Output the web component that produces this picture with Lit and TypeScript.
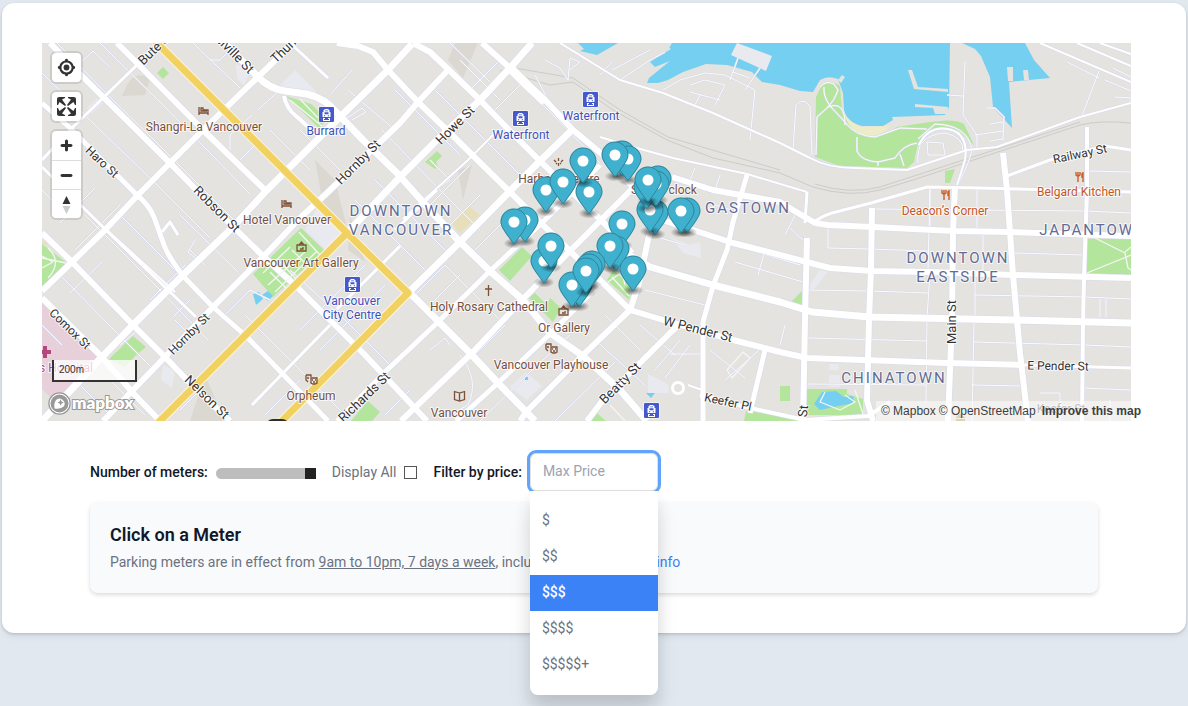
import { LitElement, html, svg, css } from "lit";
import { customElement, state } from "lit/decorators.js";

const MAJOR: [number, string][] = [
  [6, "M50 43 83 77 170 163 213 207 263 256 297 287 363 353 427 421"],
  [6, "M117 43 137 63 203 130 266 191"],
  [5, "M42 103 70 128 137 195 Q149 205 154 217 L164 245 Q168 256 183 276 L213 307 247 337 277 368 328 421"],
  [6, "M42 233 72 262 133 325 165 357 187 380 230 421"],
  [6, "M42 298 100 355 133 393 160 421"],
  [6, "M42 291 72 262 105 230 137 196 170 163 203 130 258 77 293 43"],
  [7, "M42 421 100 359 133 325 182 276 233 227 266 191 290 167 337 120 388 70 412 44"],
  [6, "M103 421 165 357 213 307 263 257 300 218 327 193 400 123 418 102 448 70"],
  [7, "M347 233 400 177 437 140 480 100 510 68 532 43"],
  [7, "M408 293 460 242 510 191 540 161 573 129"],
  [5, "M337 421 387 370 437 323 490 271 543 222 600 165"],
  [6, "M401 421 472 353 523 299 570 251 633 188"],
  [5, "M456 421 498 383 550 334 603 281"],
  [6, "M520 421 527 411 583 355 630 310 639 283 648 240 656 210"],
  [6, "M587 421 603 400 670 333 684 320"],
  [6, "M413 43 430 52 448 69 480 100 510 131 540 161 570 190 603 222 632 253"],
  [6, "M482 43 510 68 523 82 547 102 573 130 603 155 633 187"],
  [9, "M508 66 525 83 545 102"],
  [6, "M337 43 358 46 373 52 388 70 418 102 450 133 510 192 543 225 570 251 607 287 630 310"],
  [7, "M225 43 258 77 Q270 89 285 91 L307 94 Q325 98 337 113 L363 140 397 173 430 210 460 242 490 271 523 300 550 333 583 356 620 390 647 421"],
  [7, "M408 291 440 323 470 353 498 383 535 421"],
  [6, "M672 177 713 190 780 202 793 210 815 223 828 225 873 227 953 231 1010 232 1131 236"],
  [6, "M656 218 693 230 733 243 780 255 830 268 872 271 930 272 1013 275 1131 278"],
  [7, "M620 250 650 267 713 285 780 302 812 312 870 317 1013 320 1131 323"],
  [6, "M630 310 663 320 733 340 780 352 807 358 947 363 1023 365"],
  [6, "M807 238 805 320 803 421"],
  [6, "M872 208 871 270 869 320 867 400 873 421"],
  [6, "M955 187 953 231 952 320 948 421"],
  [6, "M1003 153 1007 190 1010 232 1013 275 1020 353 1028 421"],
  [5, "M747 175 733 222 727 250 713 286 703 322 703 421"],
  [5, "M765 350 750 413"],
  [4, "M700 395 750 408 805 420 868 416 890 402"],
];

const MEDIUM: [number, string][] = [
  [3, "M42 160 73 127 137 65 158 43"],
  [2, "M107 230 175 292"],
  [3, "M42 167 107 231 196 317"],
  [3, "M813 223 Q820 217 832 213 L871 203 927 187 980 188 1131 192"],
  [2, "M600 137 633 147 673 158 747 174 807 192"],
  [3, "M807 192 805 223"],
  [3, "M1007 176 1050 160 1105 146 1131 150"],
  [4, "M1087 127 1087 190 1084 278 1083 323 1082 421"],
  [3, "M1023 365 1131 368"],
  [2, "M560 43 620 80 663 93 713 113 780 143 810 158 Q828 168 855 168 L907 170 967 150 997 147 1080 117 1131 103"],
  [4, "M284 96 Q286 108 296 116 L316 134"],
  [3, "M290 43 328 78"],
  [3, "M162 232 170 222 178 235"],
  [3, "M337 309 400 246M395 230 437 190"],
  [2, "M403 219 468 160 496 132"],
  [3, "M252 405 330 325"],
  [2, "M1040 43 1131 82M1077 43 1131 66M1100 43 1131 54"],
  [2, "M957 185 Q962 170 965 160 Q969 133 948 129 Q928 126 919 145"],
  [2, "M703 330 735 340M688 385 705 391"],
];

const MINOR = [
  "M57 43 110 97 152 138 222 208 236 222",
  "M42 73 95 125 152 180 210 238",
  "M100 43 162 104 210 153 250 194",
  "M93 51 60 82M93 51 110 67M193 43 240 88M210 60 220 60 232 48",
  "M75 250 120 205M60 223 95 188M42 190 66 215",
  "M85 215 160 290 208 340",
  "M118 213 150 245 195 290M60 275 120 336 150 366",
  "M70 293 102 262M150 300 185 265",
  "M180 215 238 272M190 250 205 265M195 240 188 252 200 262",
  "M75 380 110 415M110 380 145 415M42 325 62 345",
  "M150 345 138 330 120 345M173 317 190 300M175 320 190 335",
  "M245 315 300 370 345 415M290 270 345 320 390 365",
  "M220 320 240 300 250 290 270 300M180 410 200 390",
  "M300 330 365 265M320 350 385 285M265 415 300 380",
  "M355 200 430 275M375 180 450 255",
  "M300 130 340 170M270 130 310 170M258 110 285 85",
  "M230 150 230 135 252 115M240 160 260 140M330 95 352 70M348 90 395 130",
  "M347 118 362 108 366 112 352 120M395 90 425 120 460 155",
  "M382 130 440 190 480 230M430 85 490 145 530 185",
  "M460 60 500 100M450 43 490 82M470 90 500 60M490 115 520 85",
  "M500 62 548 110 600 163M420 215 470 165M440 235 480 195",
  "M430 160 450 180 420 200M470 255 510 215M480 280 520 240",
  "M517 80 540 98M535 75 548 100",
  "M545 60 560 68 568 80M570 70 580 62 570 58 568 80",
  "M410 300 445 265 500 320M425 310 460 275",
  "M430 350 445 338 450 345M385 415 410 390",
  "M470 360 505 325M460 355 Q480 380 468 405 L450 415",
  "M480 421 530 372 570 335M540 400 600 343M555 421 615 362",
  "M595 340 645 385M605 315 640 350M640 325 675 355",
  "M645 290 705 305M650 265 690 275",
  "M620 80 650 60 665 52M612 70 650 50M600 75 612 62",
  "M663 90 680 80 705 73 725 75 755 90 750 140M690 85 705 80 725 85 715 105",
  "M690 92 720 100M700 95 695 105M730 80 738 58M745 90 760 68M733 72 750 78",
  "M793 150 796 105 Q800 100 806 102 L810 106 812 155",
  "M820 87 Q826 80 834 84 L838 90 Q835 100 827 108 L817 117 816 155",
  "M824 87 Q823 97 831 107 L845 122 Q855 136 875 137 L900 128 927 129",
  "M828 107 Q845 100 845 125M857 137 857 151 Q861 161 878 162 L895 158 Q903 145 917 143M900 154 904 166M878 161 878 166",
  "M918 163 Q915 135 945 133 Q963 137 963 150M927 142 943 143 945 155 928 155 927 142",
  "M965 61 963 115 977 135 977 148M947 95 963 96M975 135 1003 131",
  "M959 183 Q970 160 972 150 Q968 125 935 124 L918 139",
  "M987 108 995 108 1004 117 1003 140M990 124 1003 122M990 141 1003 139",
  "M1099 71 1082 116M1067 62 1099 78M1105 80 1131 91M1113 68 1131 77M1115 97 1131 98",
  "M873 209 1085 211 1131 213M930 187 930 228M977 188 977 230M1087 171 1131 172",
  "M828 225 828 248 870 249 928 251M1014 253 1083 255M930 187 928 270",
  "M983 232 983 272M975 270 975 320M930 272 927 318 926 402M974 322 972 421",
  "M808 290 870 291 928 293M975 295 1085 297 1131 299M1100 299 1100 317M1106 299 1106 317",
  "M808 338 927 341M974 342 1085 345 1131 347M972 385 1020 386M1083 388 1131 390",
  "M808 384 926 385M1040 393 1060 393 1060 421M1110 400 1110 421",
  "M735 290 803 310M733 245 800 265M735 262 803 282",
  "M690 180 695 168M715 190 720 175M715 205 732 210M660 238 685 245",
  "M765 250 758 275M790 228 803 240M795 215 785 235",
  "M785 325 780 345M725 380 765 345M710 350 745 378",
  "M655 370 680 340M665 378 690 345M670 354 703 354",
];

const THIN = "M727 370 743 352 750 358 732 378ZM42 258 66 263M48 248 Q63 262 48 278M42 268 53 262 42 256M263 273 290 247M268 285 305 252M275 292 316 252M270 272 288 290M280 262 298 281M292 250 308 266M299 232 320 255M1095 238 1125 253 1128 268 1131 270M1087 273 1131 255M1125 252 1131 247M290 100 322 126M300 99 318 118M608 282 622 272 625 285M612 277 629 296M610 405 625 421M855 390 863 414M825 392 820 402 840 410 855 402 845 395";

const AREAS: [string, string][] = [
  ["#dad8d0", "M127 85Q135 70 150 78L145 95 122 96ZM315 160 335 180 350 240 325 215ZM455 43 478 43 463 78 448 60ZM350 215 365 262 348 250ZM205 375 225 421 190 421ZM458 170 472 165 463 200Z"],
  ["#e9eaf0", "M280 85 295 70 322 98ZM236 64 250 70 244 86 237 78ZM87 108 97 98 103 103 91 114ZM305 230 317 208 342 230 327 251ZM510 387 526 372 542 386 527 400ZM648 374 668 384 669 393 648 393ZM672 238 690 245 700 242 701 258 683 253ZM809 286 820 270 828 272 813 290ZM829 375 840 375 840 387 829 387ZM829 364 839 364 839 370 829 370ZM163 365 175 370 172 388 161 380Z"],
  ["#e8d0da", "M42 302 98 357 88 368 56 403 42 389Z"],
  ["#b4e59d", "M42 244 67 263 42 288ZM109 359 133 336 146 347 135 356 125 367ZM301 228 324 250 273 297 253 274ZM286 96 311 104 327 119 319 128ZM157 73 163 67 169 73 163 79ZM351 421 368 401 380 412 372 421ZM425 162 437 151 442 156 436 162 438 166 435 169ZM499 270 522 247 532 256 510 281ZM529 298 535 293 547 305 550 298 561 308 553 322ZM607 280 613 270 631 286 629 300ZM791 302 802 291 802 305ZM780 386 790 386 790 401 780 401ZM807 389 847 389 847 394 863 399 863 415 807 415ZM1087 239 1131 238 1131 275 1087 273ZM590 421 597 413 606 421ZM746 411 803 418 803 421 744 421ZM945 171 955 169 950 183 945 183Z"],
  ["#b4e59d", "M816 97 822 85Q830 79 840 86L842 110 Q848 124 856 131 L877 137Q890 132 897 127L930 122Q955 118 964 124L974 145 960 132Q945 124 930 130L918 143 914 162 907 168 840 166 815 157Z"],
  ["#ececc8", "M842 104Q848 124 862 127L890 126Q878 140 860 134Q845 127 842 104Z"],
  ["#e6dfb9", "M452 224 468 206 480 215 460 233ZM42 243 47 238 47 246Z"],
  ["#75cff0", "M578 43 584 49 580 51 597 55 618 43ZM672 43 668 50 650 62 655 67 670 61 649 78 647 83 658 83 668 80 683 72 706 64 727 65 752 72 762 82 780 85 800 91 813 92 820 80Q828 75 838 79L843 93 844 110Q847 122 862 126L883 126 893 120 892 117 945 115 949 107 950 43Z"],
  ["#75cff0", "M962 43 975 49 981 56 990 77 993 107 1012 128 1009 82 1050 78 1034 60 1025 43ZM253 294 259 292 263 299 256 305ZM262 295 268 291 273 296 268 301ZM646 393 655 393 651 398ZM525 377 528 377 528 380 525 380ZM814 404 822 392 836 391 844 397 853 396 854 403 838 406 820 410Z"],
  ["#e4e3df", "M623 48 632 43 640 43 627 51ZM653 55 668 47 671 49 656 58ZM908 70 912 70 918 87 948 89 948 92 914 89ZM915 104 948 107 947 114 935 114 933 108 915 107ZM1007 67 1013 67 1013 81 1008 81ZM1023 70 1028 70 1029 80 1024 80ZM838 80 842 75 845 77 841 83Z"],
  ["#e9eaf0", "M737 43 772 56 766 71 731 55Z"],
];

type Label = [string, number, number, number, number?];
const STREETS: Label[] = [
  ["Bute St", 155, 48, -44, 13], ["Melville St", 231, 50, 45, 13], ["Thurlow St", 295, 39, -44, 13],
  ["Haro St", 102, 162, 43], ["Robson St", 217, 209, 45, 13], ["Hornby St", 358, 162, -45, 13],
  ["Howe St", 455, 125, -45, 13], ["Comox St", 70, 329, 44], ["Hornby St", 189, 334, -45],
  ["Nelson St", 207, 397, 44, 13], ["Richards St", 364, 397, -44, 13], ["Beatty St", 620, 383, -45, 13],
  ["W Pender St", 698, 329, 14, 13], ["Keefer Pl", 728, 402, 12], ["Railway St", 1080, 154, -12],
  ["Main St", 951, 322, -90, 13], ["E Pender St", 1058, 366, 1], ["St", 803, 411, -84, 13],
];
const PLACES: Label[] = [
  ["Shangri-La Vancouver", 204, 127, 0], ["Hotel Vancouver", 287, 220, 0],
  ["Vancouver Art Gallery", 301, 263, 0], ["Orpheum", 311, 396, 0],
  ["Harbour Centre", 559, 179, 0], ["Steam clock", 664, 190, 0],
  ["Holy Rosary Cathedral", 489, 307, 0], ["Or Gallery", 564, 328, 0],
  ["Vancouver Playhouse", 551, 365, 0], ["Vancouver", 459, 413, 0],
];
const FOOD: Label[] = [["Deacon’s Corner", 945, 211, 0], ["Belgard Kitchen", 1079, 192, 0]];
const TRANSIT: Label[] = [
  ["Burrard", 326, 131, 0], ["Waterfront", 521, 135, 0], ["Waterfront", 591, 116, 0],
  ["Vancouver", 352, 301, 0], ["City Centre", 352, 315, 0],
];
const AREAS_TXT: Label[] = [
  ["DOWNTOWN", 401, 211, 0], ["VANCOUVER", 401, 230, 0], ["GASTOWN", 748, 208, 0],
  ["DOWNTOWN", 958, 258, 0], ["EASTSIDE", 958, 277, 0], ["CHINATOWN", 894, 378, 0],
  ["JAPANTOWN", 1093, 230, 0],
];
const STATIONS = [[326, 114], [520, 118], [590, 99], [352, 284], [651, 410]];
const PINS = [
  [622, 154], [628, 159], [615, 155], [589, 192], [583, 161], [546, 190], [563, 182],
  [655, 213], [650, 210], [647, 187], [658, 179], [656, 184], [648, 180],
  [687, 211], [681, 211], [525, 220], [514, 222], [544, 261], [551, 246],
  [622, 224], [616, 249], [610, 246], [633, 269], [579, 285], [572, 285],
  [592, 264], [589, 267], [586, 271],
];
const PRICES = ["$", "$$", "$$$", "$$$$", "$$$$$+"];

@customElement("street-map")
class StreetMap extends LitElement {
  static styles = css`
    :host { display: block; height: 378px; overflow: hidden; background: #e4e3df; }
    svg { display: block; width: 100%; height: 100%; font: 400 12px Roboto, sans-serif; }
    text { text-anchor: middle; dominant-baseline: central; paint-order: stroke; stroke: #fff;
      stroke-opacity: 0.8; stroke-width: 2px; stroke-linejoin: round; }
    .street { fill: #333; }
    .place { fill: #75503f; }
    .food { fill: #c4561f; }
    .transit { fill: #3f51bb; }
    .area { fill: #626b93; font-size: 15px; letter-spacing: 2px; }
    .hospital { fill: #b5477d; }
    .line { fill: none; stroke-linejoin: round; }
    .case { stroke: #d9dbea; }
    .road { stroke: #fff; }
    .alley-case { stroke: #d9dbea; stroke-width: 2px; }
    .alley { stroke: #fbfbfe; stroke-width: 1px; }
    .yellow { stroke: #f2d163; stroke-width: 7px; }
    .yellow-case { stroke: #fdf6dc; stroke-width: 9px; }
    .rail { stroke: #cccbc8; stroke-width: 1px; }
    .thin { stroke: #f4f6f4; stroke-width: 1.3px; }
    .glyph { fill: none; stroke: #7d5038; stroke-width: 1.3px; }
  `;

  private labels(list: Label[], cls: string) {
    return list.map(([t, x, y, r, s]) => svg`<text class=${cls} x=${x} y=${y}
      transform="rotate(${r} ${x} ${y})" font-size=${s ?? 12}>${t}</text>`);
  }

  render() {
    const roads = [...MEDIUM, ...MAJOR];
    const alleys = MINOR.join("");
    return html`<svg viewBox="42 43 1089 378" preserveAspectRatio="xMidYMid slice" role="img" aria-label="Map of downtown Vancouver with parking meters">
      <defs>
        <radialGradient id="shade"><stop offset="0.1" stop-opacity="0.5"/><stop offset="1" stop-opacity="0"/></radialGradient>
      </defs>
      ${AREAS.map(([c, d]) => svg`<path fill=${c} d=${d}/>`)}
      <path class="line rail" d="M500 70 550 85 573 82 613 110 667 140 713 158 780 173 813 187Q850 198 880 190L913 180 1013 147 1080 125Q1100 120 1131 123M503 66 573 78 620 110 668 137 780 170M815 184Q850 195 880 187L1013 144 1080 122"/>
      <path class="line alley-case" d=${alleys}/>
      <path class="line alley" d=${alleys}/>
      ${roads.map(([w, d]) => svg`<path class="line case" stroke-width=${w + 1.2} d=${d}/>`)}
      ${roads.map(([w, d]) => svg`<path class="line road" stroke-width=${w} d=${d}/>`)}
      <path class="line thin" d=${THIN}/>
      <circle class="line road" cx="678" cy="388" r="5.5" stroke-width="3"/>
      <path class="line yellow-case" d="M155 41 347 233 408 293 280 423M347 233 158 423"/>
      <path class="line yellow" d="M155 41 347 233 408 293 280 423M347 233 158 423"/>
      <path fill="#2d2d2d" d="M268 421Q270 419 273 419H282Q285 419 287 421Z"/>
      <path fill="#b5477d" d="M43 346h4v4h4v4h-4v4h-4v-4h-1v-4h1Z"/>
      <text class="hospital" x="66" y="368">s Hospital</text>
      ${this.labels(STREETS, "street")}
      ${this.labels(PLACES, "place")}
      ${this.labels(FOOD, "food")}
      ${this.labels(TRANSIT, "transit")}
      ${this.labels(AREAS_TXT, "area")}
      <text class="street" x="1061" y="409" opacity="0.6">Keefer St</text>
      ${[[203, 111], [286, 204]].map(([x, y]) => svg`<path class="glyph" d="M${x - 4} ${y - 4}v8M${x - 4} ${y + 2}h9v2M${x + 5} ${y + 3}v-4h-5v-2h-2v3h6"/>`)}
      ${[[301, 247], [563, 311]].map(([x, y]) => svg`<path class="glyph" d="M${x - 4} ${y - 2}h9v6h-9ZM${x - 2} ${y - 2}l2.500-3 2.500 3M${x - 1} ${y + 2}h3v-2"/>`)}
      ${[[311, 379], [551, 348]].map(([x, y]) => svg`<path class="glyph" d="M${x - 5} ${y - 4}h5v2M${x - 5} ${y - 4}v5l2 2M${x - 4} ${y - 1}h2M${x} ${y - 1}h6v5l-2 1h-2l-2-1ZM${x + 1} ${y + 1}h1M${x + 4} ${y + 1}h1M${x + 2} ${y + 3}h2"/>`)}
      <path class="glyph" stroke-width="1.6" d="M488.500 285v11M485 289h7"/>
      <path class="glyph" d="M459.500 393l-5-1.500v8l5 1.500 5-1.500v-8ZM459.500 393v8M554 160l2 2M558.500 158v3M563 160l-2 2M556 163l1 1M561 163l-1 1M558.500 163v3"/>
      ${[[945, 195], [1079, 177]].map(([x, y]) => svg`<path fill="none" stroke="#c9602a" stroke-width="1.4" d="M${x - 3} ${y - 5}v3q2 2 4 0v-3M${x - 1} ${y - 5}v10M${x + 4} ${y - 5}v10M${x + 3} ${y - 4}v5"/>`)}
      ${STATIONS.map(([x, y]) => svg`<g transform="translate(${x - 7} ${y - 7})">
        <rect x="-0.5" y="-0.5" width="16" height="16" rx="1" fill="#fff"/>
        <rect width="15" height="15" rx="1" fill="#4559cf"/>
        <path fill="#fff" d="M5.500 2h4v1h1v2h1v5h-8V5h1V3h1ZM4 11h2v1H4ZM9 11h2v1H9ZM4 12h1v1h5v-1h1v2H4Z"/>
        <path fill="#4559cf" d="M6 3.500h3v.8H6ZM5.500 5.200h4v2h-4ZM5 8.200h1.200v1H5ZM8.800 8.200H10v1H8.800Z"/></g>`)}
      <path fill="#bda45a" d="M960 414 966 418H955ZM956 419h9v2h-9Z"/>
      ${PINS.map(([x, y]) => svg`<g transform="translate(${x - 13.5} ${y - 13.5})">
        <ellipse cx="13.5" cy="34.8" rx="10.5" ry="5.25" fill="url(#shade)"/>
        <path fill="#3fb1ce" d="M27 13.5C27 19.07 20.25 27 14.75 34.5C14.02 35.5 12.98 35.5 12.25 34.5C6.75 27 0 19.22 0 13.5C0 6.04 6.04 0 13.5 0C20.96 0 27 6.04 27 13.5Z"/>
        <path fill="none" stroke="#000" stroke-opacity="0.25" d="M26.5 13.5C26.5 18.8 20 26.6 14.35 34.2C13.8 34.9 13.2 34.9 12.65 34.2C7 26.6 .5 18.9 .5 13.5C.5 6.3 6.3 .5 13.5 .5C20.7 .5 26.5 6.3 26.5 13.5Z"/>
        <circle cx="13.5" cy="13.5" r="5.5" fill="#fff"/></g>`)}
    </svg>`;
  }
}

@customElement("app-root")
class AppRoot extends LitElement {
  @state() private active = 2;

  static styles = css`
    :host { display: block; min-height: 100vh; box-sizing: border-box; padding: 3px 2px;
      background: #e1e8f0; font-family: Roboto, sans-serif; font-size: 14px; line-height: 20px; color: #111827; }
    .card { background: #fff; border-radius: 12px; padding: 40px;
      box-shadow: 0 1px 3px rgba(0, 0, 0, 0.16), 0 4px 6px rgba(0, 0, 0, 0.06); }
    .map { position: relative; }
    .canvas { margin-right: 15px; }
    .controls { position: absolute; top: 10px; left: 10px; display: grid; gap: 10px; }
    .group { display: grid; width: 29px; background: #fff; border-radius: 4px; box-shadow: 0 0 0 2px rgba(0, 0, 0, 0.1); }
    .group button { display: block; height: 29px; padding: 0; border: 0; background: none; color: #333; cursor: pointer; }
    .group button + button { border-top: 1px solid #ddd; }
    .group svg { display: block; width: 29px; height: 29px; fill: currentColor; }
    .scale { position: absolute; left: 10px; bottom: 39px; box-sizing: border-box; width: 85px; height: 22px;
      padding: 0 5px; border: 2px solid #333; border-top: 0; background: rgba(255, 255, 255, 0.75);
      color: #333; font: 10px/19px "Liberation Sans", Arial, sans-serif; }
    .logo { position: absolute; left: 6px; bottom: 6px; display: flex; align-items: center; gap: 1px;
      color: #fff; text-decoration: none; font: 800 17px/24px Lato, sans-serif;
      paint-order: stroke; -webkit-text-stroke: 2px #999; }
    .logo svg { width: 23px; height: 23px; }
    .credit { position: absolute; right: 0; bottom: 0; display: flex; gap: 6px; padding: 0 5px;
      background: rgba(255, 255, 255, 0.5); font: 12px/20px "Liberation Sans", Arial, sans-serif; }
    .credit a { color: #404040; text-decoration: none; }
    .credit .strong { font-weight: 700; }
    .credit span { display: flex; gap: 3px; }
    .below { padding: 32px 48px 0; }
    .filters { display: flex; align-items: center; }
    .name { font-weight: 500; }
    .slider { appearance: none; width: 100px; height: 11px; margin: 2px 16px 0 8px; border-radius: 6px 0 0 6px;
      background: #bdbdbd; overflow: hidden; }
    .slider::-webkit-slider-thumb { appearance: none; width: 11px; height: 11px; background: #222; }
    .check { display: flex; align-items: center; gap: 8px; margin-right: 16px; color: #6b7280; }
    .check input { appearance: none; width: 13px; height: 13px; margin: 0; border: 1px solid #555; background: #fff; }
    .check input:checked { background: #222; }
    .combo { position: relative; width: 128px; margin-left: 8px; }
    .field { display: block; box-sizing: border-box; width: 100%; height: 38px; padding: 0 12px 2px;
      border: 1px solid #e0e0e0; border-radius: 6px; outline: 0; background: #fff; color: #374151;
      font: inherit; box-shadow: 0 0 0 3px #60a5fa; }
    .field::placeholder { color: #9ca3af; opacity: 1; }
    .menu { position: absolute; z-index: 2; top: 100%; left: 0; right: 0; display: grid; padding: 12px 0;
      border-radius: 0 0 8px 8px; background: #fff;
      box-shadow: 0 10px 15px rgba(0, 0, 0, 0.1), 0 20px 25px rgba(0, 0, 0, 0.08); }
    .option { height: 36px; padding: 0 12px 2px; border: 0; background: none; color: #6b7280; font: inherit;
      text-align: left; cursor: pointer; }
    .option.on { background: #3b82f6; color: #fff; font-weight: 500; }
    .panel { margin-top: 11px; padding: 20px; border-radius: 8px; background: #f9fafc;
      box-shadow: 0 2px 4px rgba(0, 0, 0, 0.14); }
    .panel h2 { margin: 0 0 5px; font-size: 18px; line-height: 25px; font-weight: 600; }
    .panel p { margin: 0; line-height: 21px; color: #6b7280; }
    .panel a { color: #3b82f6; text-decoration: none; }
  `;

  render() {
    return html`<main class="card">
      <section class="map">
        <street-map class="canvas"></street-map>
        <div class="controls">
          <div class="group"><button aria-label="Find my location"><svg viewBox="0 0 20 20"><path fill-rule="evenodd" d="M10 4C9 4 9 5 9 5v.1A5 5 0 0 0 5.1 9H5s-1 0-1 1 1 1 1 1h.1A5 5 0 0 0 9 14.9v.1s0 1 1 1 1-1 1-1v-.1a5 5 0 0 0 3.9-3.9h.1s1 0 1-1-1-1-1-1h-.1A5 5 0 0 0 11 5.1V5s0-1-1-1zm0 2.5a3.5 3.5 0 1 1 0 7 3.5 3.5 0 1 1 0-7z"/><circle cx="10" cy="10" r="2"/></svg></button></div>
          <div class="group"><button aria-label="Enter fullscreen"><svg viewBox="0 0 29 29"><path d="M24 16v5.5c0 1.75-.75 2.5-2.5 2.5H16v-1l3-1.5-4-5.5 1-1 5.5 4 1.5-3h1zM6 16l1.5 3 5.5-4 1 1-4 5.5 3 1.5v1H7.5C5.75 24 5 23.25 5 21.5V16h1zm7-11v1l-3 1.5 4 5.5-1 1-5.5-4L6 13H5V7.5C5 5.75 5.75 5 7.5 5H13zm11 2.5c0-1.75-.75-2.5-2.5-2.5H16v1l3 1.5-4 5.5 1 1 5.5-4 1.5 3h1V7.5z"/></svg></button></div>
          <div class="group">
            <button aria-label="Zoom in"><svg viewBox="0 0 29 29"><path d="M14.5 8.5c-.75 0-1.5.75-1.5 1.5v3h-3c-.75 0-1.5.75-1.5 1.5S9.25 16 10 16h3v3c0 .75.75 1.5 1.5 1.5S16 19.75 16 19v-3h3c.75 0 1.5-.75 1.5-1.5S19.75 13 19 13h-3v-3c0-.75-.75-1.5-1.5-1.5z"/></svg></button>
            <button aria-label="Zoom out"><svg viewBox="0 0 29 29"><path d="M10 13c-.75 0-1.5.75-1.5 1.5S9.25 16 10 16h9c.75 0 1.5-.75 1.5-1.5S19.75 13 19 13h-9z"/></svg></button>
            <button aria-label="Reset bearing to north"><svg viewBox="0 0 29 29"><path d="M10.5 14l4-8 4 8h-8z"/><path fill="#ccc" d="M10.5 16l4 8 4-8h-8z"/></svg></button>
          </div>
        </div>
        <div class="scale">200m</div>
        <a class="logo" href="#mapbox"><svg viewBox="0 0 23 23"><circle cx="11.5" cy="11.5" r="9.5" fill="none" stroke="#999" stroke-width="3.4"/><circle cx="11.5" cy="11.5" r="9" fill="#999" stroke="#fff" stroke-width="2"/><path fill="#fff" stroke="none" d="M6.5 16.5Q5.5 10 9 7.3a5.2 5.2 0 0 1 7 7Q13 17.500 6.500 16.500Z"/><path fill="#999" stroke="none" d="M12.600 7.300l1 2.200 2.200 1-2.200 1-1 2.200-1-2.200-2.200-1 2.200-1Z"/></svg>mapbox</a>
        <div class="credit"><span><a href="#about">© Mapbox</a><a href="#osm">© OpenStreetMap</a></span><a class="strong" href="#improve">Improve this map</a></div>
      </section>
      <section class="below">
        <div class="filters">
          <label class="name" for="count">Number of meters:</label>
          <input class="slider" id="count" type="range" min="1" max="100" value="100" />
          <label class="check">Display All <input type="checkbox" /></label>
          <label class="name" for="price">Filter by price:</label>
          <div class="combo">
            <input class="field" id="price" placeholder="Max Price" autocomplete="off" />
            <div class="menu" role="listbox" aria-label="Max price">
              ${PRICES.map((p, i) => html`<button class="option ${i === this.active ? "on" : ""}" role="option"
                aria-selected=${i === this.active ? "true" : "false"} @mouseenter=${() => (this.active = i)}>${p}</button>`)}
            </div>
          </div>
        </div>
        <article class="panel">
          <h2>Click on a Meter</h2>
          <p>Parking meters are in effect from <u>9am to 10pm, 7 days a week</u>, including holidays. <a href="#info">More info</a></p>
        </article>
      </section>
    </main>`;
  }
}
